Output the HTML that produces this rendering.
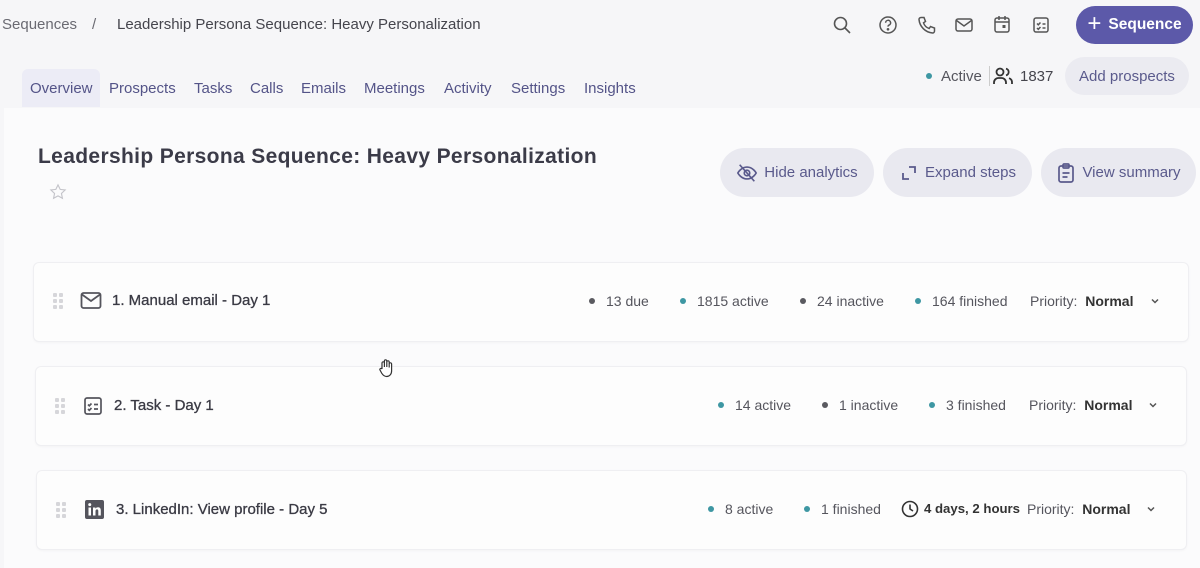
<!DOCTYPE html>
<html><head><meta charset="utf-8"><style>
*{margin:0;padding:0;box-sizing:border-box}
body{width:1200px;height:558px;overflow:hidden;background:#f6f6f8;font-family:"Liberation Sans",sans-serif;position:relative;color:#3a3a44}
.a{position:absolute;white-space:nowrap}
.tab{position:absolute;top:80px;font-size:15px;color:#545488}
.panel{position:absolute;left:4px;top:108px;width:1200px;height:460px;background:#fbfbfc}
.card{position:absolute;left:33px;width:1156px;height:80px;background:#fdfdfd;border:1px solid #efeff2;border-radius:6px;box-shadow:0 1px 2px rgba(0,0,0,.03)}
.st{position:absolute;font-size:14px;color:#55555d;top:293px}
.dot{display:inline-block;width:6px;height:6px;border-radius:50%;margin-right:11px;vertical-align:2px}
.t{background:#3e97a3}.g{background:#5a5a60}
.btn{position:absolute;top:148px;height:49px;border-radius:25px;background:#e9e9f0;color:#5a5a8c;font-size:15px;display:flex;align-items:center;justify-content:center;gap:6px}
.grip{position:absolute;width:10px;height:16px}
.grip i{position:absolute;width:4px;height:4px;background:#d6d6da;border-radius:1px}
.ttl{position:absolute;font-size:15px;color:#3a3a44;-webkit-text-stroke:.3px #3a3a44}
.pr{color:#55555d}.nm{color:#333;font-weight:bold}
svg{display:block}
</style></head><body>
<div class="a" style="left:2px;top:16px;font-size:15px;color:#6a6a72">Sequences</div>
<div class="a" style="left:92px;top:16px;font-size:15px;color:#6a6a72">/</div>
<div class="a" style="left:117px;top:16px;font-size:15px;color:#45454d">Leadership Persona Sequence: Heavy Personalization</div>

<svg class="a" style="left:832px;top:15px" width="20" height="20" viewBox="0 0 20 20" fill="none" stroke="#555" stroke-width="1.6"><circle cx="8.5" cy="8.5" r="6"/><path d="M13 13l5 5"/></svg>
<svg class="a" style="left:878px;top:15px" width="20" height="20" viewBox="0 0 20 20" fill="none" stroke="#555" stroke-width="1.5"><circle cx="10" cy="10" r="8"/><path d="M7.6 7.8a2.5 2.5 0 1 1 3.2 2.4c-.6.3-.8.7-.8 1.4"/><circle cx="10" cy="14.3" r=".6" fill="#555"/></svg>
<svg class="a" style="left:917px;top:15px" width="20" height="20" viewBox="0 0 20 20" fill="none" stroke="#555" stroke-width="1.5"><path d="M4 2.5h3l1.5 4-2 1.3a9 9 0 0 0 5.7 5.7l1.3-2 4 1.5v3a2 2 0 0 1-2 2A15 15 0 0 1 2 4.5a2 2 0 0 1 2-2z"/></svg>
<svg class="a" style="left:954px;top:15px" width="20" height="20" viewBox="0 0 20 20" fill="none" stroke="#555" stroke-width="1.5"><rect x="2" y="4" width="16" height="12" rx="2"/><path d="M2.5 5.5l7.5 5.5 7.5-5.5"/></svg>
<svg class="a" style="left:992px;top:14px" width="20" height="20" viewBox="0 0 20 20" fill="none" stroke="#555" stroke-width="1.5"><rect x="3" y="4" width="14" height="14" rx="2"/><path d="M3 8h14M7 2v4M13 2v4"/><rect x="10.5" y="11" width="3" height="3" fill="#555" stroke="none"/></svg>
<svg class="a" style="left:1031px;top:15px" width="20" height="20" viewBox="0 0 20 20" fill="none" stroke="#555" stroke-width="1.5"><rect x="3" y="3" width="14" height="14" rx="2"/><path d="M6 8.5l1.3 1.3L9.5 7.5M6 13l1.3 1.3 2.2-2.3M11.5 9h3M11.5 13h3"/></svg>
<div class="a" style="left:1076px;top:6px;width:117px;height:38px;border-radius:19px;background:#5c59a9;color:#fff;font-size:15.5px;font-weight:bold;display:flex;align-items:center;justify-content:center;gap:7px"><span style="font-size:24px;font-weight:normal;line-height:1;margin-top:-3px">+</span>Sequence</div>

<div class="a" style="left:22px;top:69px;width:78px;height:38px;background:#ececf6;border-radius:6px 6px 0 0"></div>
<div class="tab" style="left:30px">Overview</div>
<div class="tab" style="left:109px">Prospects</div>
<div class="tab" style="left:194px">Tasks</div>
<div class="tab" style="left:250px">Calls</div>
<div class="tab" style="left:301px">Emails</div>
<div class="tab" style="left:364px">Meetings</div>
<div class="tab" style="left:444px">Activity</div>
<div class="tab" style="left:511px">Settings</div>
<div class="tab" style="left:584px">Insights</div>

<div class="a" style="left:926px;top:68px;font-size:15px;color:#55555d"><span class="dot t" style="margin-right:9px"></span>Active</div>
<div class="a" style="left:989px;top:66px;width:1px;height:20px;background:#ccc"></div>
<svg class="a" style="left:992px;top:65px" width="22" height="22" viewBox="0 0 22 22" fill="none" stroke="#333" stroke-width="1.8"><circle cx="8" cy="7" r="3.5"/><path d="M2 19v-1.5A4.5 4.5 0 0 1 6.5 13h3a4.5 4.5 0 0 1 4.5 4.5V19M14 3.6a3.5 3.5 0 0 1 0 6.8M17 13.2a4.5 4.5 0 0 1 3 4.3V19"/></svg>
<div class="a" style="left:1020px;top:68px;font-size:15px;color:#45454d">1837</div>
<div class="a" style="left:1065px;top:57px;width:124px;height:38px;border-radius:19px;background:#ebebf1;color:#5a5a8c;font-size:15px;display:flex;align-items:center;justify-content:center">Add prospects</div>

<div class="panel"></div>
<div class="a" style="left:38px;top:145px;font-size:21px;letter-spacing:.35px;font-weight:bold;color:#3b3b48">Leadership Persona Sequence: Heavy Personalization</div>
<svg class="a" style="left:49px;top:183px" width="18" height="18" viewBox="0 0 24 24" fill="none" stroke="#c4c4ca" stroke-width="1.5"><path d="M12 2.5l2.9 6 6.6.8-4.9 4.6 1.3 6.5L12 17.2l-5.9 3.2 1.3-6.5L2.5 9.3l6.6-.8z"/></svg>

<div class="btn" style="left:720px;width:154px"><svg width="22" height="22" viewBox="0 0 24 24" fill="none" stroke="#5a5a8c" stroke-width="1.8"><path d="M2 12s3.5-6.5 10-6.5S22 12 22 12s-3.5 6.5-10 6.5S2 12 2 12z"/><circle cx="12" cy="12" r="3"/><path d="M4 3l16 18"/></svg>Hide analytics</div>
<div class="btn" style="left:883px;width:149px"><svg width="20" height="20" viewBox="0 0 20 20" fill="none" stroke="#5a5a8c" stroke-width="1.8"><path d="M4 10v6h6M16 10V4h-6"/></svg>Expand steps</div>
<div class="btn" style="left:1041px;width:155px"><svg width="20" height="22" viewBox="0 0 20 22" fill="none" stroke="#5a5a8c" stroke-width="1.7"><rect x="3" y="4" width="14" height="16" rx="2"/><rect x="7" y="2" width="6" height="4" rx="1"/><path d="M6.5 11h7M6.5 15h5"/></svg>View summary</div>

<div class="card" style="top:262px"></div>
<div class="card" style="top:366px;left:35px;width:1152px"></div>
<div class="card" style="top:470px;left:36px;width:1151px"></div>

<div class="grip" style="left:53px;top:293px"><i style="left:0;top:0"></i><i style="left:6px;top:0"></i><i style="left:0;top:6px"></i><i style="left:6px;top:6px"></i><i style="left:0;top:12px"></i><i style="left:6px;top:12px"></i></div>
<div class="grip" style="left:55px;top:398px"><i style="left:0;top:0"></i><i style="left:6px;top:0"></i><i style="left:0;top:6px"></i><i style="left:6px;top:6px"></i><i style="left:0;top:12px"></i><i style="left:6px;top:12px"></i></div>
<div class="grip" style="left:56px;top:502px"><i style="left:0;top:0"></i><i style="left:6px;top:0"></i><i style="left:0;top:6px"></i><i style="left:6px;top:6px"></i><i style="left:0;top:12px"></i><i style="left:6px;top:12px"></i></div>

<svg class="a" style="left:80px;top:291px" width="22" height="19" viewBox="0 0 22 19" fill="none" stroke="#55555d" stroke-width="1.8"><rect x="1.5" y="2" width="19" height="15" rx="2"/><path d="M2 3.5l9 6.5 9-6.5"/></svg>
<div class="ttl" style="left:112px;top:292px">1. Manual email - Day 1</div>
<svg class="a" style="left:83px;top:396px" width="20" height="20" viewBox="0 0 20 20" fill="none" stroke="#55555d" stroke-width="1.7"><rect x="2" y="2" width="16" height="16" rx="2"/><path d="M5 8.5l1.3 1.3 2.2-2.3M5 13l1.3 1.3 2.2-2.3M11 8.5h4M11 13h4"/></svg>
<div class="ttl" style="left:114px;top:397px">2. Task - Day 1</div>
<svg class="a" style="left:85px;top:500px" width="19" height="19" viewBox="0 0 19 19"><rect width="19" height="19" rx="2" fill="#55555d"/><rect x="3.5" y="7.5" width="2.5" height="8" fill="#fff"/><circle cx="4.75" cy="4.6" r="1.5" fill="#fff"/><path d="M8 7.5h2.4v1.2c.5-.9 1.5-1.4 2.7-1.4 2 0 2.7 1.2 2.7 3.3v4.9h-2.5v-4.4c0-1-.3-1.7-1.3-1.7s-1.5.7-1.5 1.8v4.3H8z" fill="#fff"/></svg>
<div class="ttl" style="left:116px;top:501px">3. LinkedIn: View profile - Day 5</div>

<div class="st" style="left:589px"><span class="dot g"></span>13 due</div>
<div class="st" style="left:680px"><span class="dot t"></span>1815 active</div>
<div class="st" style="left:800px"><span class="dot g"></span>24 inactive</div>
<div class="st" style="left:915px"><span class="dot t"></span>164 finished</div>
<div class="st" style="left:1030px"><span class="pr">Priority:</span>&nbsp;&nbsp;<span class="nm">Normal</span></div>
<svg class="a" style="left:1150px;top:297px" width="10" height="8" viewBox="0 0 10 8" fill="none" stroke="#555" stroke-width="1.5"><path d="M2 2.5l3 3 3-3"/></svg>

<div class="st" style="left:718px;top:397px"><span class="dot t"></span>14 active</div>
<div class="st" style="left:822px;top:397px"><span class="dot g"></span>1 inactive</div>
<div class="st" style="left:929px;top:397px"><span class="dot t"></span>3 finished</div>
<div class="st" style="left:1029px;top:397px"><span class="pr">Priority:</span>&nbsp;&nbsp;<span class="nm">Normal</span></div>
<svg class="a" style="left:1148px;top:401px" width="10" height="8" viewBox="0 0 10 8" fill="none" stroke="#555" stroke-width="1.5"><path d="M2 2.5l3 3 3-3"/></svg>

<div class="st" style="left:708px;top:501px"><span class="dot t"></span>8 active</div>
<div class="st" style="left:804px;top:501px"><span class="dot t"></span>1 finished</div>
<svg class="a" style="left:901px;top:500px" width="18" height="18" viewBox="0 0 18 18" fill="none" stroke="#333" stroke-width="1.6"><circle cx="9" cy="9" r="7.5"/><path d="M9 4.5V9l3 2"/></svg>
<div class="st" style="left:924px;top:501px;color:#333;font-weight:bold;font-size:13.2px">4 days, 2 hours</div>
<div class="st" style="left:1027px;top:501px"><span class="pr">Priority:</span>&nbsp;&nbsp;<span class="nm">Normal</span></div>
<svg class="a" style="left:1146px;top:505px" width="10" height="8" viewBox="0 0 10 8" fill="none" stroke="#555" stroke-width="1.5"><path d="M2 2.5l3 3 3-3"/></svg>

<svg class="a" style="left:377px;top:357px" width="20" height="22" viewBox="0 0 20 22" fill="#fff" stroke="#333" stroke-width="1.2"><path d="M5 12V6a1.2 1.2 0 0 1 2.4 0v4V4a1.2 1.2 0 0 1 2.4 0v6V5a1.2 1.2 0 0 1 2.4 0v5.5V7a1.2 1.2 0 0 1 2.4 0v7c0 3-2 5.5-5 5.5-2.5 0-3.7-1.3-5-3.5L3 13a1.1 1.1 0 0 1 2-1z"/></svg>
</body></html>
